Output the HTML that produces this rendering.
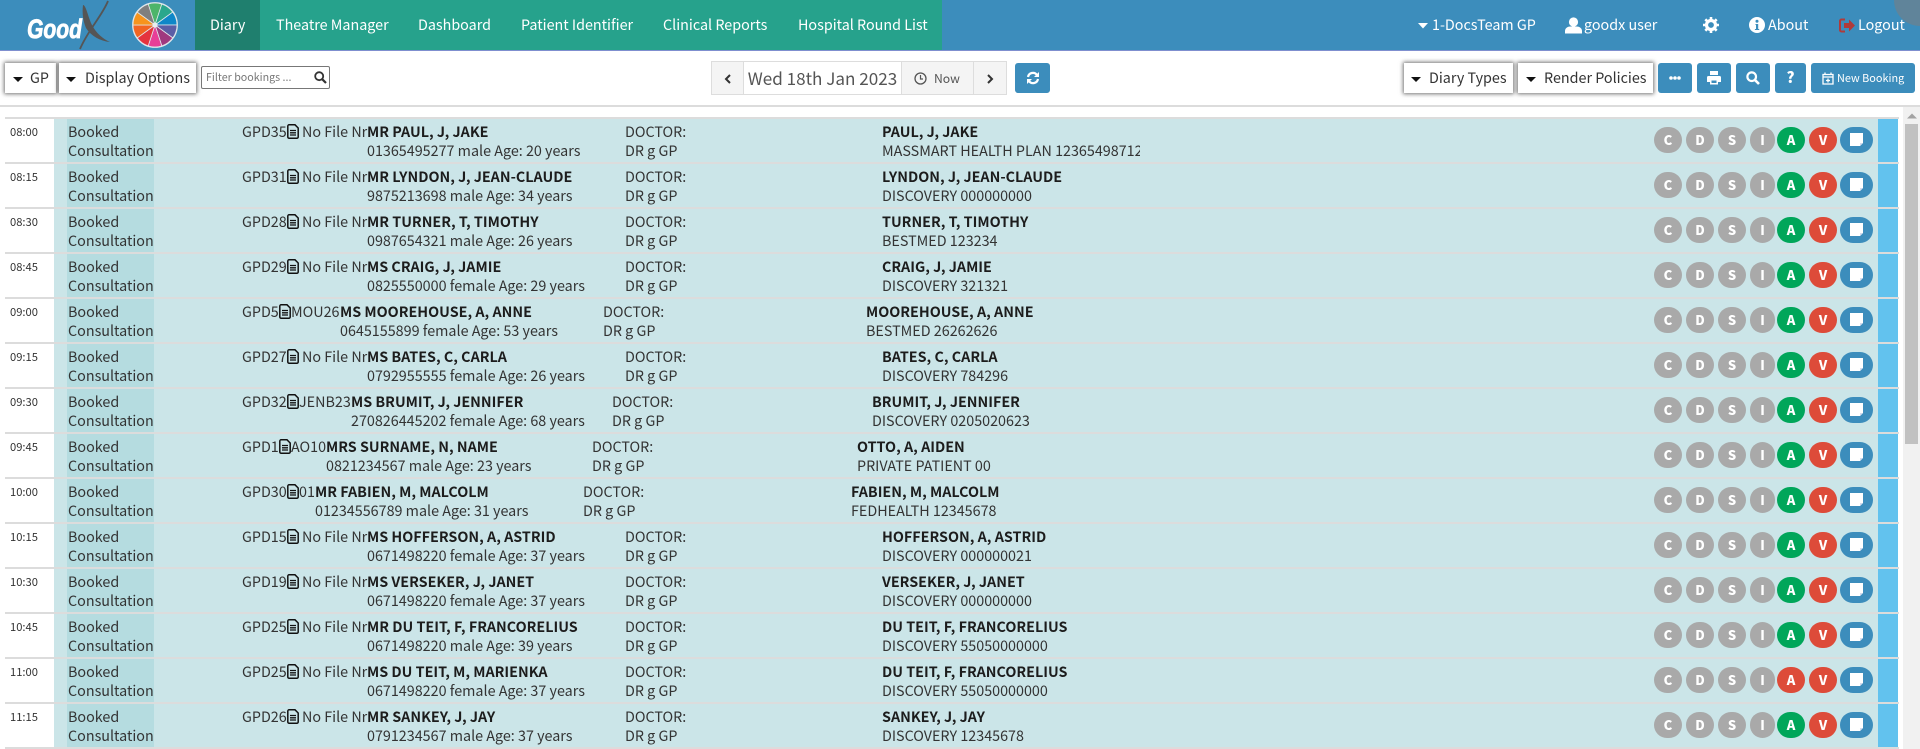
<!DOCTYPE html>
<html><head><meta charset="utf-8"><title>Diary</title>
<style>
html,body{margin:0;padding:0;width:1920px;height:749px;overflow:hidden;background:#fff}
body{font-family:"Noto Sans CJK SC","Liberation Sans",sans-serif;font-size:14.33px;color:#333;position:relative}
.a,.r span,.r div{position:absolute;white-space:nowrap}
.hd{position:absolute;left:0;top:0;width:1920px;height:50px;background:#3c8dbc;border-bottom:1px solid #7f8fcf}
.gr{position:absolute;left:195px;top:0;width:747px;height:50px;background:#26a28c}
.dk{position:absolute;left:195px;top:0;width:65px;height:50px;background:#1f7f6e}
.nv{position:absolute;top:0;line-height:50px;color:#fff;white-space:nowrap}
.tb{position:absolute;top:63px;height:30px;background:#fff;box-shadow:0 0 4px 1px rgba(0,0,0,.55);line-height:30px;color:#333;white-space:nowrap}
.cr{position:absolute;top:14px;width:0;height:0;border-left:5px solid transparent;border-right:5px solid transparent;border-top:5px solid #111}
.bb{position:absolute;top:63px;height:30px;background:#3c8dbc;border-radius:3px;color:#fff}
.dg{position:absolute;top:61px;height:32px;background:#f4f4f4;border:1px solid #ddd;line-height:32px;color:#555;text-align:center}
.r{position:absolute;left:0;width:1898px;height:43px;background:#cbe5e8;line-height:19px}
.tm{left:0;top:0;width:49px;height:43px;background:#fff;border-left:5px solid #fff;font-size:11.2px;line-height:27px;text-indent:5px}
.bk{left:67px;top:0;width:86px;height:40px;padding:3px 0 0 1px;background:#b5dce0}
.g{left:242px;top:3px}
.ff{left:302px;top:3px}
.n{left:367px;top:3px}
.d{left:625px;top:3px}
.t{left:882px;top:3px;width:258px;overflow:hidden}
b{font-weight:700;color:#1c1c1c}
.fi{position:absolute;left:287px;top:5px;width:12px;height:15px}
.st{position:absolute;left:1878px;top:0;width:20px;height:43px;background:#62c2ee}
.o{top:8px;height:26px;line-height:25px;width:28px;border-radius:13px;background:#a9a9a9;color:#fff;font-weight:900;font-size:13px;text-align:center}
.sp{position:absolute;left:5px;width:1894px;height:2px;background:#dcdcdc}
</style></head><body>
<svg width="0" height="0" style="position:absolute"><defs>
<g id="file"><path d="M1.700 .8H8L11.200 4V13A1.300 1.300 0 0 1 10 14.200H2A1.300 1.300 0 0 1 .8 13V2A1.300 1.300 0 0 1 1.700 .8Z" fill="none" stroke="#111" stroke-width="1.500"/><path d="M3 6.500H9M3 8.800H9M3 11H9" stroke="#111" stroke-width="1.300"/></g>
<g id="note"><path d="M0 0H13V10L10 13H0Z" fill="#fff"/><path d="M10 13V10H13Z" fill="#d4dcef"/></g>
</defs></svg>

<div class="hd">
<svg class="a" style="left:0;top:0" width="195" height="50">
<text x="27" y="38" font-family="Liberation Sans" font-weight="700" font-style="italic" font-size="27" fill="#fff" stroke="#fff" stroke-width=".8" textLength="55" lengthAdjust="spacingAndGlyphs">Good</text>
<path d="M83 5C86 5 88 17 92 25C96 33 103 39 110 42C100 41 91 36 86 28C83 21 82 13 83 5Z" fill="#555"/>
<path d="M108 1C102 16 88 30 80 49" fill="none" stroke="#555" stroke-width="1.800"/>
<g stroke="#dfe6ea" stroke-width=".8">
<path d="M155 25L148.200 4.100A22 22 0 0 1 161.800 4.100Z" fill="#4db56a"/>
<path d="M155 25L161.800 4.100A22 22 0 0 1 172.800 12.100Z" fill="#2aa78c"/>
<path d="M155 25L172.800 12.100A22 22 0 0 1 177 25Z" fill="#0f87c8"/>
<path d="M155 25L177 25A22 22 0 0 1 172.800 37.900Z" fill="#5b5ea6"/>
<path d="M155 25L172.800 37.900A22 22 0 0 1 161.800 45.900Z" fill="#a0397f"/>
<path d="M155 25L161.800 45.900A22 22 0 0 1 148.200 45.900Z" fill="#e83e97"/>
<path d="M155 25L148.200 45.900A22 22 0 0 1 137.200 37.900Z" fill="#e5333d"/>
<path d="M155 25L137.200 37.900A22 22 0 0 1 133 25Z" fill="#f26522"/>
<path d="M155 25L133 25A22 22 0 0 1 137.200 12.100Z" fill="#f7941d"/>
<path d="M155 25L137.200 12.100A22 22 0 0 1 148.200 4.100Z" fill="#7f7f7f"/>
</g>
<circle cx="155" cy="25" r="22.400" fill="none" stroke="#dfe6ea" stroke-width="1"/>
<circle cx="155" cy="25" r="2.600" fill="#e8eef0"/>
</svg>
<div class="gr"></div><div class="dk"></div>
<span class="nv" style="left:210px">Diary</span>
<span class="nv" style="left:276px">Theatre Manager</span>
<span class="nv" style="left:418px">Dashboard</span>
<span class="nv" style="left:521px">Patient Identifier</span>
<span class="nv" style="left:663px">Clinical Reports</span>
<span class="nv" style="left:798px">Hospital Round List</span>

<svg class="a" style="left:1418px;top:23px" width="10" height="6"><path d="M0 0H10L5 5.500Z" fill="#fff"/></svg>
<span class="nv" style="left:1432px">1-DocsTeam GP</span>
<svg class="a" style="left:1565px;top:17px" width="17" height="17"><circle cx="8.500" cy="5" r="4.600" fill="#fff"/><path d="M0 16.500V14C0 11 3 9.500 5 9.500H12C14 9.500 17 11 17 14V16.500Z" fill="#fff"/></svg>
<span class="nv" style="left:1584px">goodx user</span>
<svg class="a" style="left:1703px;top:17px" width="16" height="16" viewBox="0 0 16 16"><circle cx="8" cy="8" r="4.500" fill="none" stroke="#fff" stroke-width="3.200"/><path d="M8 0V3M8 13V16M0 8H3M13 8H16M2.300 2.300L4.400 4.400M11.600 11.600L13.700 13.700M13.700 2.300L11.600 4.400M4.400 11.600L2.300 13.700" stroke="#fff" stroke-width="2.600"/></svg>
<svg class="a" style="left:1749px;top:17px" width="16" height="16"><circle cx="8" cy="8" r="8" fill="#fff"/><path d="M6.500 7H9.200V12H10.200V13H5.900V12H7V8H6.500Z" fill="#3c8dbc"/><circle cx="8" cy="4.300" r="1.500" fill="#3c8dbc"/></svg>
<span class="nv" style="left:1768px">About</span>
<svg class="a" style="left:1839px;top:18px" width="16" height="15"><path d="M6 1.500H2.500A1.500 1.500 0 0 0 1 3V12A1.500 1.500 0 0 0 2.500 13.500H6" fill="none" stroke="#b03a3a" stroke-width="2"/><path d="M5 5H10V1.500L16 7.500L10 13.500V10H5Z" fill="#b03a3a"/></svg>
<span class="nv" style="left:1858px">Logout</span>
<div class="a" style="left:1894px;top:-26px;width:52px;height:52px;border-radius:50%;background:rgba(125,125,125,.55)"></div>
</div>

<div class="tb" style="left:5px;width:51px"><i class="cr" style="left:8px"></i><span class="a" style="left:25px">GP</span></div>
<div class="tb" style="left:59px;width:137px"><i class="cr" style="left:7px"></i><span class="a" style="left:26px">Display Options</span></div>
<div class="a" style="left:201px;top:66px;width:127px;height:21px;border:1px solid #777;border-radius:2px;background:#fff;font-size:10.700px;line-height:21px;color:#777;text-indent:4px">Filter bookings ...<svg class="a" style="left:112px;top:4px" width="13" height="13"><circle cx="5.200" cy="5.200" r="4" fill="none" stroke="#333" stroke-width="1.800"/><path d="M8.200 8.200L12 12" stroke="#333" stroke-width="2.200"/></svg></div>

<div class="dg" style="left:711px;width:31px"><svg class="a" style="left:12px;top:12px" width="8" height="10"><path d="M6 1L2 5L6 9" fill="none" stroke="#333" stroke-width="2"/></svg></div>
<div class="dg" style="left:743px;width:157px;background:#fff;font-size:17.100px;color:#555">Wed 18th Jan 2023</div>
<div class="dg" style="left:901px;width:71px;font-size:12.200px"><svg class="a" style="left:12px;top:10px" width="13" height="13"><circle cx="6.500" cy="6.500" r="5.500" fill="none" stroke="#555" stroke-width="1.300"/><path d="M6.500 3V7H9" fill="none" stroke="#555" stroke-width="1.200"/></svg><span class="a" style="left:32px">Now</span></div>
<div class="dg" style="left:973px;width:32px"><svg class="a" style="left:12px;top:12px" width="8" height="10"><path d="M2 1L6 5L2 9" fill="none" stroke="#333" stroke-width="2"/></svg></div>
<div class="bb" style="left:1015px;width:35px"><svg class="a" style="left:11px;top:8px" width="14" height="14" viewBox="0 0 14 14"><path d="M2 6A5 5 0 0 1 11 4" fill="none" stroke="#fff" stroke-width="2.200"/><path d="M13 1V6H8Z" fill="#fff"/><path d="M12 8A5 5 0 0 1 3 10" fill="none" stroke="#fff" stroke-width="2.200"/><path d="M1 13V8H6Z" fill="#fff"/></svg></div>

<div class="tb" style="left:1404px;width:109px"><i class="cr" style="left:7px"></i><span class="a" style="left:25px">Diary Types</span></div>
<div class="tb" style="left:1518px;width:135px"><i class="cr" style="left:8px"></i><span class="a" style="left:26px">Render Policies</span></div>
<div class="bb" style="left:1658px;width:34px"><svg class="a" style="left:11px;top:13px" width="12" height="4"><circle cx="2" cy="2" r="1.800" fill="#fff"/><circle cx="6" cy="2" r="1.800" fill="#fff"/><circle cx="10" cy="2" r="1.800" fill="#fff"/></svg></div>
<div class="bb" style="left:1697px;width:34px"><svg class="a" style="left:10px;top:8px" width="14" height="14"><path d="M3 0H11V4H3ZM1.500 5H12.500A1.500 1.500 0 0 1 14 6.500V11H11V13.500H3V11H0V6.500A1.500 1.500 0 0 1 1.500 5Z" fill="#fff"/><path d="M4.500 9.500H9.500V12H4.500Z" fill="#3c8dbc"/></svg></div>
<div class="bb" style="left:1736px;width:34px"><svg class="a" style="left:10px;top:8px" width="14" height="14"><circle cx="5.700" cy="5.700" r="4.300" fill="none" stroke="#fff" stroke-width="2.200"/><path d="M8.800 8.800L13 13" stroke="#fff" stroke-width="2.600"/></svg></div>
<div class="bb" style="left:1775px;width:31px;text-align:center;font-weight:900;font-size:15px;line-height:30px">?</div>
<div class="bb" style="left:1811px;width:104px;font-size:10.900px;line-height:30px"><svg class="a" style="left:11px;top:9px" width="12" height="13"><path d="M1 2.500H11V12H1ZM3 .5V3M9 .5V3M1 5H11M6 6.500V10.500M4 8.500H8" fill="none" stroke="#fff" stroke-width="1.300"/></svg><span class="a" style="left:26px">New Booking</span></div>

<div class="a" style="left:0;top:105px;width:1920px;height:2px;background:#dcdcdc"></div>
<div class="a" style="left:1903px;top:107px;width:17px;height:642px;background:#f1f1f1"></div>
<svg class="a" style="left:1907px;top:113px" width="10" height="6"><path d="M0 5.500L5 .5L10 5.500Z" fill="#a3a3a3"/></svg>
<div class="a" style="left:1905px;top:124px;width:13px;height:320px;background:#c1c1c1"></div>

<div class="sp" style="top:117px"></div><div class="sp" style="top:162px"></div><div class="sp" style="top:207px"></div><div class="sp" style="top:252px"></div><div class="sp" style="top:297px"></div><div class="sp" style="top:342px"></div><div class="sp" style="top:387px"></div><div class="sp" style="top:432px"></div><div class="sp" style="top:477px"></div><div class="sp" style="top:522px"></div><div class="sp" style="top:567px"></div><div class="sp" style="top:612px"></div><div class="sp" style="top:657px"></div><div class="sp" style="top:702px"></div><div class="sp" style="top:747px"></div>

<div class="r" style="top:119px"><span class="tm">08:00</span><span class="bk">Booked<br>Consultation</span><span class="g">GPD35</span><svg class="fi"><use href="#file"/></svg><span class="ff">No File Nr</span><div class="n"><b>MR PAUL, J, JAKE</b><br>01365495277 male Age: 20 years</div><div class="d">DOCTOR:<br>DR g GP</div><div class="t"><b>PAUL, J, JAKE</b><br>MASSMART HEALTH PLAN 12365498712</div><span class="o" style="left:1654px">C</span><span class="o" style="left:1686px">D</span><span class="o" style="left:1718px">S</span><span class="o" style="left:1750px;width:25px">I</span><span class="o" style="left:1777px;background:#00a65a">A</span><span class="o" style="left:1809px;background:#dd4b39">V</span><span class="o" style="left:1840px;width:33px;background:#3c8dbc"></span><svg class="a" style="left:1850px;top:14px" width="13" height="13"><use href="#note"/></svg><div class="st"></div></div>

<div class="r" style="top:164px"><span class="tm">08:15</span><span class="bk">Booked<br>Consultation</span><span class="g">GPD31</span><svg class="fi"><use href="#file"/></svg><span class="ff">No File Nr</span><div class="n"><b>MR LYNDON, J, JEAN-CLAUDE</b><br>9875213698 male Age: 34 years</div><div class="d">DOCTOR:<br>DR g GP</div><div class="t"><b>LYNDON, J, JEAN-CLAUDE</b><br>DISCOVERY 000000000</div><span class="o" style="left:1654px">C</span><span class="o" style="left:1686px">D</span><span class="o" style="left:1718px">S</span><span class="o" style="left:1750px;width:25px">I</span><span class="o" style="left:1777px;background:#00a65a">A</span><span class="o" style="left:1809px;background:#dd4b39">V</span><span class="o" style="left:1840px;width:33px;background:#3c8dbc"></span><svg class="a" style="left:1850px;top:14px" width="13" height="13"><use href="#note"/></svg><div class="st"></div></div>

<div class="r" style="top:209px"><span class="tm">08:30</span><span class="bk">Booked<br>Consultation</span><span class="g">GPD28</span><svg class="fi"><use href="#file"/></svg><span class="ff">No File Nr</span><div class="n"><b>MR TURNER, T, TIMOTHY</b><br>0987654321 male Age: 26 years</div><div class="d">DOCTOR:<br>DR g GP</div><div class="t"><b>TURNER, T, TIMOTHY</b><br>BESTMED 123234</div><span class="o" style="left:1654px">C</span><span class="o" style="left:1686px">D</span><span class="o" style="left:1718px">S</span><span class="o" style="left:1750px;width:25px">I</span><span class="o" style="left:1777px;background:#00a65a">A</span><span class="o" style="left:1809px;background:#dd4b39">V</span><span class="o" style="left:1840px;width:33px;background:#3c8dbc"></span><svg class="a" style="left:1850px;top:14px" width="13" height="13"><use href="#note"/></svg><div class="st"></div></div>

<div class="r" style="top:254px"><span class="tm">08:45</span><span class="bk">Booked<br>Consultation</span><span class="g">GPD29</span><svg class="fi"><use href="#file"/></svg><span class="ff">No File Nr</span><div class="n"><b>MS CRAIG, J, JAMIE</b><br>0825550000 female Age: 29 years</div><div class="d">DOCTOR:<br>DR g GP</div><div class="t"><b>CRAIG, J, JAMIE</b><br>DISCOVERY 321321</div><span class="o" style="left:1654px">C</span><span class="o" style="left:1686px">D</span><span class="o" style="left:1718px">S</span><span class="o" style="left:1750px;width:25px">I</span><span class="o" style="left:1777px;background:#00a65a">A</span><span class="o" style="left:1809px;background:#dd4b39">V</span><span class="o" style="left:1840px;width:33px;background:#3c8dbc"></span><svg class="a" style="left:1850px;top:14px" width="13" height="13"><use href="#note"/></svg><div class="st"></div></div>

<div class="r" style="top:299px"><span class="tm">09:00</span><span class="bk">Booked<br>Consultation</span><span class="g">GPD5</span><svg class="fi" style="left:279px"><use href="#file"/></svg><span class="ff" style="left:291px">MOU26</span><div class="n" style="left:340px"><b>MS MOOREHOUSE, A, ANNE</b><br>0645155899 female Age: 53 years</div><div class="d" style="left:603px">DOCTOR:<br>DR g GP</div><div class="t" style="left:866px"><b>MOOREHOUSE, A, ANNE</b><br>BESTMED 26262626</div><span class="o" style="left:1654px">C</span><span class="o" style="left:1686px">D</span><span class="o" style="left:1718px">S</span><span class="o" style="left:1750px;width:25px">I</span><span class="o" style="left:1777px;background:#00a65a">A</span><span class="o" style="left:1809px;background:#dd4b39">V</span><span class="o" style="left:1840px;width:33px;background:#3c8dbc"></span><svg class="a" style="left:1850px;top:14px" width="13" height="13"><use href="#note"/></svg><div class="st"></div></div>

<div class="r" style="top:344px"><span class="tm">09:15</span><span class="bk">Booked<br>Consultation</span><span class="g">GPD27</span><svg class="fi"><use href="#file"/></svg><span class="ff">No File Nr</span><div class="n"><b>MS BATES, C, CARLA</b><br>0792955555 female Age: 26 years</div><div class="d">DOCTOR:<br>DR g GP</div><div class="t"><b>BATES, C, CARLA</b><br>DISCOVERY 784296</div><span class="o" style="left:1654px">C</span><span class="o" style="left:1686px">D</span><span class="o" style="left:1718px">S</span><span class="o" style="left:1750px;width:25px">I</span><span class="o" style="left:1777px;background:#00a65a">A</span><span class="o" style="left:1809px;background:#dd4b39">V</span><span class="o" style="left:1840px;width:33px;background:#3c8dbc"></span><svg class="a" style="left:1850px;top:14px" width="13" height="13"><use href="#note"/></svg><div class="st"></div></div>

<div class="r" style="top:389px"><span class="tm">09:30</span><span class="bk">Booked<br>Consultation</span><span class="g">GPD32</span><svg class="fi"><use href="#file"/></svg><span class="ff" style="left:299px">JENB23</span><div class="n" style="left:351px"><b>MS BRUMIT, J, JENNIFER</b><br>270826445202 female Age: 68 years</div><div class="d" style="left:612px">DOCTOR:<br>DR g GP</div><div class="t" style="left:872px"><b>BRUMIT, J, JENNIFER</b><br>DISCOVERY 0205020623</div><span class="o" style="left:1654px">C</span><span class="o" style="left:1686px">D</span><span class="o" style="left:1718px">S</span><span class="o" style="left:1750px;width:25px">I</span><span class="o" style="left:1777px;background:#00a65a">A</span><span class="o" style="left:1809px;background:#dd4b39">V</span><span class="o" style="left:1840px;width:33px;background:#3c8dbc"></span><svg class="a" style="left:1850px;top:14px" width="13" height="13"><use href="#note"/></svg><div class="st"></div></div>

<div class="r" style="top:434px"><span class="tm">09:45</span><span class="bk">Booked<br>Consultation</span><span class="g">GPD1</span><svg class="fi" style="left:279px"><use href="#file"/></svg><span class="ff" style="left:291px">AO10</span><div class="n" style="left:326px"><b>MRS SURNAME, N, NAME</b><br>0821234567 male Age: 23 years</div><div class="d" style="left:592px">DOCTOR:<br>DR g GP</div><div class="t" style="left:857px"><b>OTTO, A, AIDEN</b><br>PRIVATE PATIENT 00</div><span class="o" style="left:1654px">C</span><span class="o" style="left:1686px">D</span><span class="o" style="left:1718px">S</span><span class="o" style="left:1750px;width:25px">I</span><span class="o" style="left:1777px;background:#00a65a">A</span><span class="o" style="left:1809px;background:#dd4b39">V</span><span class="o" style="left:1840px;width:33px;background:#3c8dbc"></span><svg class="a" style="left:1850px;top:14px" width="13" height="13"><use href="#note"/></svg><div class="st"></div></div>

<div class="r" style="top:479px"><span class="tm">10:00</span><span class="bk">Booked<br>Consultation</span><span class="g">GPD30</span><svg class="fi"><use href="#file"/></svg><span class="ff" style="left:299px">01</span><div class="n" style="left:315px"><b>MR FABIEN, M, MALCOLM</b><br>01234556789 male Age: 31 years</div><div class="d" style="left:583px">DOCTOR:<br>DR g GP</div><div class="t" style="left:851px"><b>FABIEN, M, MALCOLM</b><br>FEDHEALTH 12345678</div><span class="o" style="left:1654px">C</span><span class="o" style="left:1686px">D</span><span class="o" style="left:1718px">S</span><span class="o" style="left:1750px;width:25px">I</span><span class="o" style="left:1777px;background:#00a65a">A</span><span class="o" style="left:1809px;background:#dd4b39">V</span><span class="o" style="left:1840px;width:33px;background:#3c8dbc"></span><svg class="a" style="left:1850px;top:14px" width="13" height="13"><use href="#note"/></svg><div class="st"></div></div>

<div class="r" style="top:524px"><span class="tm">10:15</span><span class="bk">Booked<br>Consultation</span><span class="g">GPD15</span><svg class="fi"><use href="#file"/></svg><span class="ff">No File Nr</span><div class="n"><b>MS HOFFERSON, A, ASTRID</b><br>0671498220 female Age: 37 years</div><div class="d">DOCTOR:<br>DR g GP</div><div class="t"><b>HOFFERSON, A, ASTRID</b><br>DISCOVERY 000000021</div><span class="o" style="left:1654px">C</span><span class="o" style="left:1686px">D</span><span class="o" style="left:1718px">S</span><span class="o" style="left:1750px;width:25px">I</span><span class="o" style="left:1777px;background:#00a65a">A</span><span class="o" style="left:1809px;background:#dd4b39">V</span><span class="o" style="left:1840px;width:33px;background:#3c8dbc"></span><svg class="a" style="left:1850px;top:14px" width="13" height="13"><use href="#note"/></svg><div class="st"></div></div>

<div class="r" style="top:569px"><span class="tm">10:30</span><span class="bk">Booked<br>Consultation</span><span class="g">GPD19</span><svg class="fi"><use href="#file"/></svg><span class="ff">No File Nr</span><div class="n"><b>MS VERSEKER, J, JANET</b><br>0671498220 female Age: 37 years</div><div class="d">DOCTOR:<br>DR g GP</div><div class="t"><b>VERSEKER, J, JANET</b><br>DISCOVERY 000000000</div><span class="o" style="left:1654px">C</span><span class="o" style="left:1686px">D</span><span class="o" style="left:1718px">S</span><span class="o" style="left:1750px;width:25px">I</span><span class="o" style="left:1777px;background:#00a65a">A</span><span class="o" style="left:1809px;background:#dd4b39">V</span><span class="o" style="left:1840px;width:33px;background:#3c8dbc"></span><svg class="a" style="left:1850px;top:14px" width="13" height="13"><use href="#note"/></svg><div class="st"></div></div>

<div class="r" style="top:614px"><span class="tm">10:45</span><span class="bk">Booked<br>Consultation</span><span class="g">GPD25</span><svg class="fi"><use href="#file"/></svg><span class="ff">No File Nr</span><div class="n"><b>MR DU TEIT, F, FRANCORELIUS</b><br>0671498220 male Age: 39 years</div><div class="d">DOCTOR:<br>DR g GP</div><div class="t"><b>DU TEIT, F, FRANCORELIUS</b><br>DISCOVERY 55050000000</div><span class="o" style="left:1654px">C</span><span class="o" style="left:1686px">D</span><span class="o" style="left:1718px">S</span><span class="o" style="left:1750px;width:25px">I</span><span class="o" style="left:1777px;background:#00a65a">A</span><span class="o" style="left:1809px;background:#dd4b39">V</span><span class="o" style="left:1840px;width:33px;background:#3c8dbc"></span><svg class="a" style="left:1850px;top:14px" width="13" height="13"><use href="#note"/></svg><div class="st"></div></div>

<div class="r" style="top:659px"><span class="tm">11:00</span><span class="bk">Booked<br>Consultation</span><span class="g">GPD25</span><svg class="fi"><use href="#file"/></svg><span class="ff">No File Nr</span><div class="n"><b>MS DU TEIT, M, MARIENKA</b><br>0671498220 female Age: 37 years</div><div class="d">DOCTOR:<br>DR g GP</div><div class="t"><b>DU TEIT, F, FRANCORELIUS</b><br>DISCOVERY 55050000000</div><span class="o" style="left:1654px">C</span><span class="o" style="left:1686px">D</span><span class="o" style="left:1718px">S</span><span class="o" style="left:1750px;width:25px">I</span><span class="o" style="left:1777px;background:#dd4b39">A</span><span class="o" style="left:1809px;background:#dd4b39">V</span><span class="o" style="left:1840px;width:33px;background:#3c8dbc"></span><svg class="a" style="left:1850px;top:14px" width="13" height="13"><use href="#note"/></svg><div class="st"></div></div>

<div class="r" style="top:704px"><span class="tm">11:15</span><span class="bk">Booked<br>Consultation</span><span class="g">GPD26</span><svg class="fi"><use href="#file"/></svg><span class="ff">No File Nr</span><div class="n"><b>MR SANKEY, J, JAY</b><br>0791234567 male Age: 37 years</div><div class="d">DOCTOR:<br>DR g GP</div><div class="t"><b>SANKEY, J, JAY</b><br>DISCOVERY 12345678</div><span class="o" style="left:1654px">C</span><span class="o" style="left:1686px">D</span><span class="o" style="left:1718px">S</span><span class="o" style="left:1750px;width:25px">I</span><span class="o" style="left:1777px;background:#00a65a">A</span><span class="o" style="left:1809px;background:#dd4b39">V</span><span class="o" style="left:1840px;width:33px;background:#3c8dbc"></span><svg class="a" style="left:1850px;top:14px" width="13" height="13"><use href="#note"/></svg><div class="st"></div></div>
</body></html>
